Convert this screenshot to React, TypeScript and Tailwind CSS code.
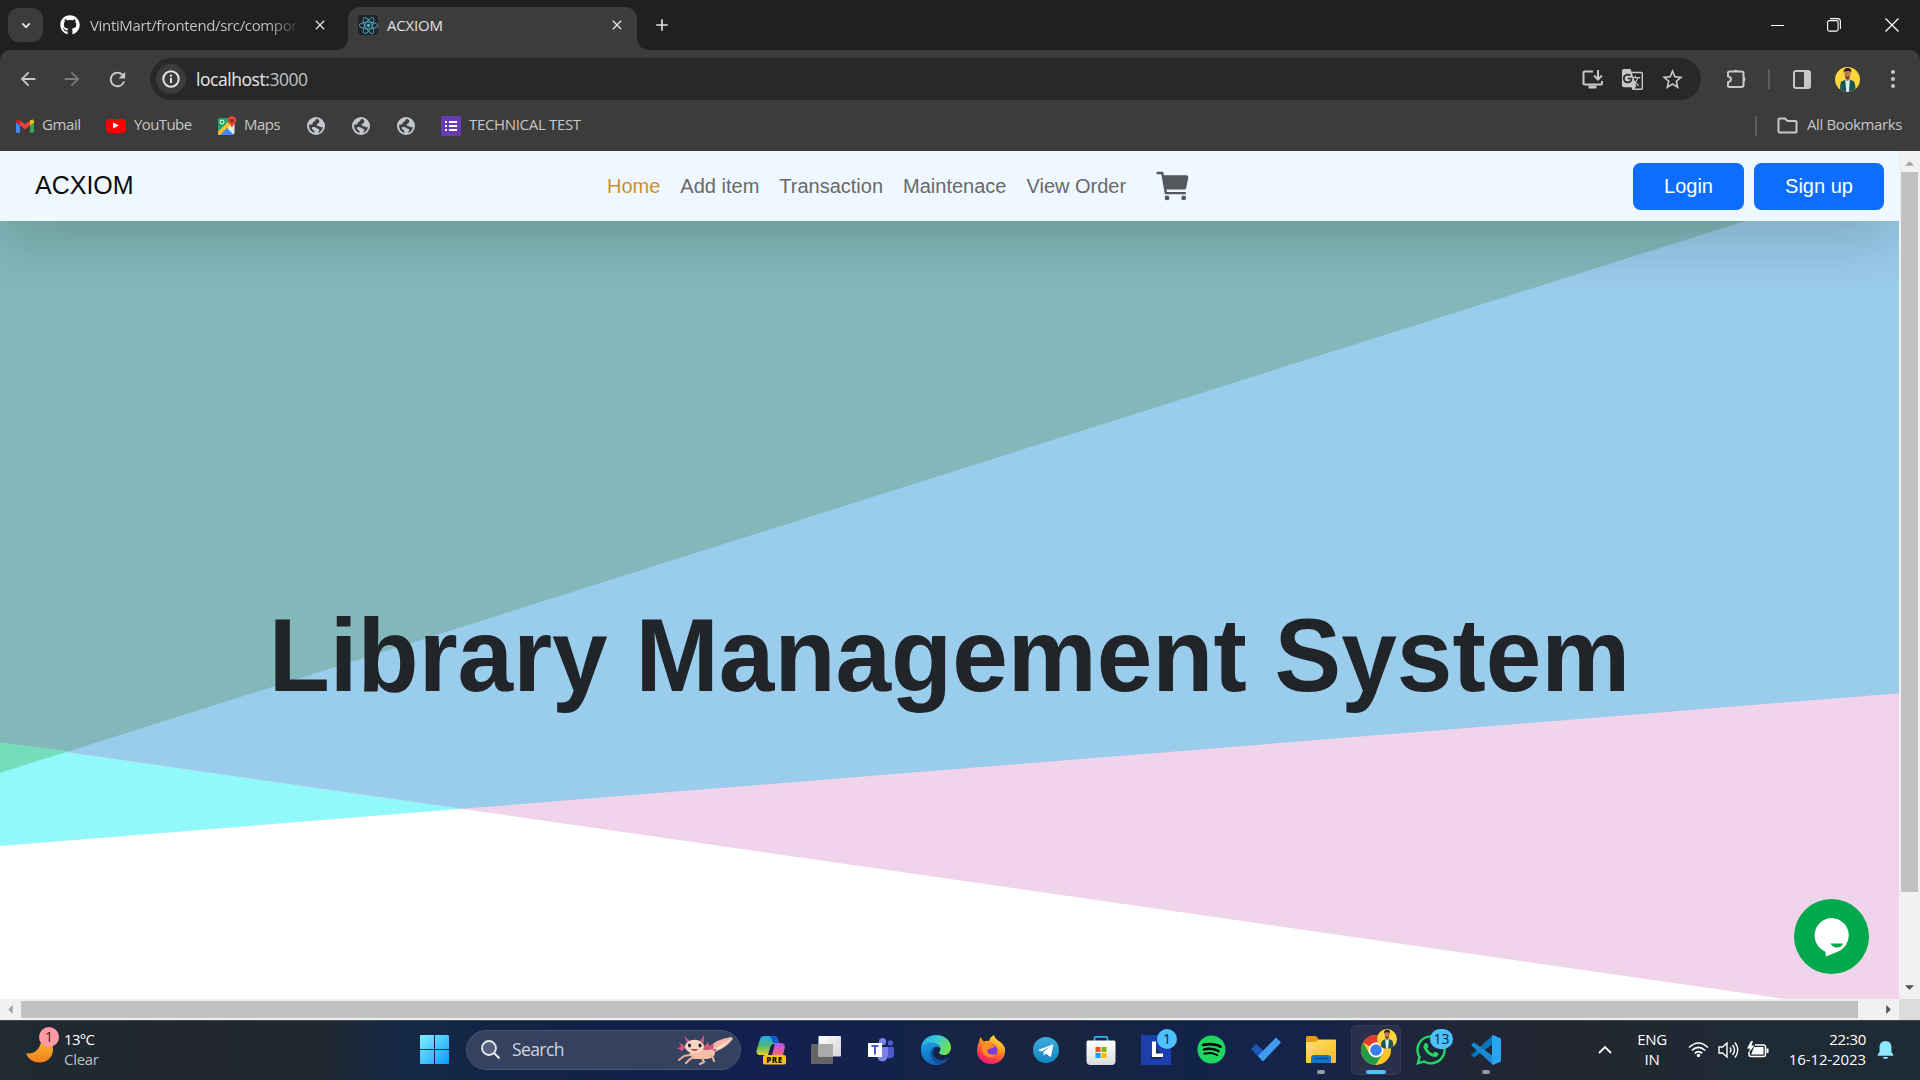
import React from "react";
import { FaGithub, FaReact, FaSpotify, FaWhatsapp } from "react-icons/fa";
import { IoCart } from "react-icons/io5";
import { MdArrowBack, MdArrowForward, MdRefresh, MdStarBorder, MdClose, MdAdd, MdGTranslate } from "react-icons/md";

function Avatar({ className }: { className: string }) {
  return (
    <svg viewBox="0 0 25 25" className={className}>
      <defs>
        <clipPath id="avatarClip"><circle cx="12.5" cy="12.5" r="12.5" /></clipPath>
      </defs>
      <g clipPath="url(#avatarClip)">
        <rect width="25" height="25" fill="#fdd63b" />
        <path d="M5 25c0-6 .4-9 1.300-10.400L11 12.500h4l4 2c1.200 2 1.500 6 1.500 10.500z" fill="#1c5653" />
        <path d="M10.300 12.500h4.600l-1 12.500h-2.600z" fill="#d8eef2" />
        <path d="M10.600 9h3.800v3.500l-1.900 1.700-1.900-1.700z" fill="#a96a45" />
        <ellipse cx="12.500" cy="6.800" rx="3" ry="4" fill="#b87a52" />
        <path d="M8.800 6C8.200 2.500 10.300 1 12.600 1s4.300 1.300 3.600 5c-.6-1.600-1-2-3.400-2S9.300 4.300 8.800 6z" fill="#2b1d1a" />
        <path d="M10 8.300c.4 2.600 4.600 2.600 5 0 0 4.400-5 4.400-5 0z" fill="#3a241c" />
      </g>
    </svg>
  );
}

function GlobeIcon() {
  return (
    <span className="flex h-[18px] w-[18px] items-center justify-center">
      <svg viewBox="0 0 18 18" className="h-[18px] w-[18px]">
        <circle cx="9" cy="9" r="9" fill="#c4c7cc" />
        <path d="M10.500 1.900c-2.500 0-1.800 2-3.200 2.600-.8.400-1.600.3-1.500 1.500 0 1.200-1.300 1.500-2.500 1.600H2.200c-.6 3.800 1.300 7.100 5.300 8.400v-1.700c0-1-1.200-1.300-2-1.900-.8-.7-1-1.900-.1-2.100 1.800-.4 3.300-.2 4 .8.700 1 2.900.5 2.900 2.100 0 1.200-1.300 1.500-1.200 2.900 2.800-.8 4.700-3.600 4.900-6.300-1 .7-2.600.8-3.300-.2-.6-.9-2.700-.3-3-1.700-.2-1.200 1.300-1.300 1.900-2 .7-.8 1.700-2.500-1.100-4z" fill="#3f4043" />
      </svg>
    </span>
  );
}

function TabStrip() {
  return (
    <div className="flex h-[50px] bg-[#1f2121]">
      <div className="ml-2 mt-2 flex h-[34px] w-[35px] items-center justify-center rounded-[11px] bg-[#3c3c3c]">
        <svg viewBox="0 0 12 8" className="h-[7px] w-[10px]"><path d="M1.500 1.500L6 6l4.500-4.500" fill="none" stroke="#e3e3e3" strokeWidth="2.200" /></svg>
      </div>
      <div className="flex w-[305px] items-center pl-[17px]">
        <FaGithub className="h-[20px] w-[20px] text-white" />
        <span className="ml-[10px] w-[210px] whitespace-nowrap bg-gradient-to-r from-[#c7c7c7] from-85% to-transparent bg-clip-text text-[15px] tracking-[-0.35px] text-transparent">VintiMart/frontend/src/compon</span>
        <MdClose className="ml-[12px] h-[16px] w-[16px] text-[#dedede]" />
      </div>
      <div className="relative mt-[7px] flex h-[43px] w-[289px] items-center rounded-t-[12px] bg-[#3c3c3c] pb-[7px] pl-[10px]">
        <svg viewBox="0 0 12 12" className="absolute bottom-0 left-[-12px] h-3 w-3"><path d="M12 0v12H0C7 12 12 7 12 0z" fill="#3c3c3c" /></svg>
        <svg viewBox="0 0 12 12" className="absolute bottom-0 right-[-12px] h-3 w-3"><path d="M0 0v12h12C5 12 0 7 0 0z" fill="#3c3c3c" /></svg>
        <span className="flex h-5 w-5 items-center justify-center rounded-[3px] bg-[#20232a]"><FaReact className="h-[19px] w-[19px] text-[#4fb4cc]" /></span>
        <span className="ml-[9px] w-[220px] text-[15px] tracking-[-0.2px] text-[#e3e3e3]">ACXIOM</span>
        <MdClose className="ml-[2px] h-[16px] w-[16px] text-[#e3e3e3]" />
      </div>
      <MdAdd className="ml-[15px] mt-[15px] h-[20px] w-[20px] text-[#dedede]" />
      <div className="ml-auto flex items-center pr-[21px]">
        <span className="h-px w-[13px] bg-white" />
        <svg viewBox="0 0 14 14" className="ml-[43px] h-[14px] w-[14px]" fill="none" stroke="#fff" strokeWidth="1.100">
          <rect x=".6" y="2.600" width="10.500" height="10.500" rx="1.800" /><path d="M3 .6h7.500c1.700 0 2.900 1.200 2.900 2.900v7.500" />
        </svg>
        <svg viewBox="0 0 14 14" className="ml-[44px] h-[14px] w-[14px]" stroke="#fff" strokeWidth="1.200"><path d="M.5 .5l13 13M13.500 .5l-13 13" /></svg>
      </div>
    </div>
  );
}

function Toolbar() {
  return (
    <div className="bg-[#1f2121]">
      <div className="flex h-[58px] items-center rounded-t-[10px] bg-[#3c3c3c] text-[#c7c7c7]">
        <MdArrowBack className="ml-[17px] h-[22px] w-[22px]" />
        <MdArrowForward className="ml-[22px] h-[22px] w-[22px] text-[#7b7b7b]" />
        <MdRefresh className="ml-[23px] h-[23px] w-[23px]" />
        <div className="ml-[21px] flex h-[42px] w-[1551px] items-center rounded-full bg-[#282828] pl-[6px]">
          <span className="flex h-[30px] w-[30px] items-center justify-center rounded-full bg-[#3c3c3c]">
            <svg viewBox="0 0 18 18" className="h-[18px] w-[18px]" fill="none" stroke="#e3e3e3" strokeWidth="2"><circle cx="9" cy="9" r="7.700" /><path d="M9 8v5M9 4.800v2" /></svg>
          </span>
          <span className="ml-[10px] text-[17.500px] tracking-[-0.45px] text-[#e8e8e8]">localhost:<span className="text-[#bfc2c6]">3000</span></span>
          <svg viewBox="0 0 21 19" className="ml-auto h-[19px] w-[21px]" fill="none" stroke="#c7c7c7" strokeWidth="2"><path d="M11 1.500H2.500q-1 0-1 1v11q0 1 1 1H19q1 0 1-1V11M16 0v9M12 5.500l4 4 4-4" /><path d="M6.500 17h8" strokeWidth="3" /></svg>
          <MdGTranslate className="ml-[18px] h-[23px] w-[23px]" />
          <MdStarBorder className="ml-[16px] mr-[16px] h-[25px] w-[25px]" />
        </div>
        <svg viewBox="0 0 22 22" className="ml-[25px] h-[22px] w-[22px]" fill="none" stroke="#c7c7c7" strokeWidth="2"><path d="M3 3.500h12.500q2 0 2 2v11.500q0 2-2 2H3.500q-1.500 0-1.500-1.500v-3.200c2-.6 3-1.700 3-3s-1-2.400-3-3V5q0-1.500 1.500-1.500z" /><path d="M7 3.500a3 3 0 0 1 5.500 0zM17.500 8.500v5.500a2.900 2.900 0 0 0 0-5.500z" fill="#c7c7c7" stroke="none" /></svg>
        <span className="ml-[20px] h-[20px] w-[2px] bg-[#5d5d5d]" />
        <svg viewBox="0 0 18 19" className="ml-[23px] h-[19px] w-[18px]"><rect x="1" y="1" width="16" height="17" rx="2" fill="none" stroke="#c7c7c7" strokeWidth="2" /><path d="M11 1h6v17h-6z" fill="#c7c7c7" /></svg>
        <Avatar className="ml-[24px] h-[25px] w-[25px]" />
        <div className="ml-[31px] flex flex-col gap-[3px]">
          <i className="h-1 w-1 rounded-full bg-[#c7c7c7]" /><i className="h-1 w-1 rounded-full bg-[#c7c7c7]" /><i className="h-1 w-1 rounded-full bg-[#c7c7c7]" />
        </div>
      </div>
    </div>
  );
}

function Bookmarks() {
  return (
    <div className="flex h-[43px] items-center bg-[#3c3c3c] pb-[8px] text-[15px] text-[#c7c7c7]">
      <div className="flex w-[90px] items-center pl-4">
        <svg viewBox="0 0 20 15" className="h-[14px] w-[18px]">
          <path d="M0 2v12q0 1 1 1h3.500V6z" fill="#4285f4" /><path d="M20 2v12q0 1-1 1h-3.500V6z" fill="#34a853" />
          <path d="M15.500 1.500L18 .3q2 .2 2 2.200v1.200L15.500 7z" fill="#fbbc04" /><path d="M4.500 1.500L10 5.600l5.500-4.100V7L10 11 4.500 7z" fill="#ea4335" /><path d="M4.500 1.500L2 .3Q0 .5 0 2.500v1.200L4.500 7z" fill="#c5221f" />
        </svg>
        <span className="relative -top-px ml-2 tracking-[-0.4px]">Gmail</span>
      </div>
      <div className="flex w-[111px] items-center pl-4">
        <span className="flex h-[14px] w-5 items-center justify-center rounded-[4px] bg-[#f00]"><svg viewBox="0 0 6 6" className="h-[7px] w-[6px]"><path d="M0 0l6 3-6 3z" fill="#fff" /></svg></span>
        <span className="relative -top-px ml-2 tracking-[-0.6px]">YouTube</span>
      </div>
      <div className="flex w-[106px] items-center pl-4">
        <svg viewBox="0 0 20 20" className="h-[20px] w-[20px]">
          <path d="M2 2h11v17H2q-1 0-1-1V3q0-1 1-1z" fill="#1fa463" /><path d="M2 19L15 5l2 2v11z" fill="#e8eaed" /><path d="M1 15.500L14 3l3.500 4L5 19H2q-1 0-1-1z" fill="#fbc02d" /><path d="M3 19l7-7 7 7z" fill="#4285f4" /><path d="M11 11l6.500-5v12z" fill="#e8eaed" />
          <circle cx="5" cy="6" r="2" fill="none" stroke="#fff" /><path d="M15 0a4.300 4.300 0 0 0-4.200 4.500C11 7.500 14 8 15 12c1-4 4-4.500 4.200-7.500A4.300 4.300 0 0 0 15 0z" fill="#db4437" /><circle cx="15" cy="4.500" r="1.500" fill="#7b231c" />
        </svg>
        <span className="relative -top-px ml-[7px] tracking-[-0.5px]">Maps</span>
      </div>
      <div className="flex w-[134px] gap-[27px]"><GlobeIcon /><GlobeIcon /><GlobeIcon /></div>
      <div className="flex items-center">
        <svg viewBox="0 0 20 20" className="h-5 w-5"><rect width="20" height="20" rx="1.500" fill="#673ab7" /><path d="M4 6h2M8 6h8M4 10h2M8 10h8M4 14h2M8 14h8" stroke="#fff" strokeWidth="2" /></svg>
        <span className="relative -top-px ml-2 tracking-[-0.33px]">TECHNICAL TEST</span>
      </div>
      <span className="ml-auto h-5 w-[2px] bg-[#5d5d5d]" />
      <svg viewBox="0 0 21 17" className="ml-[20px] h-[17px] w-[21px]"><path d="M2.500 1.500h5.500l2.500 2.500h8q1 0 1 1v9.500q0 1-1 1h-16q-1 0-1-1v-12q0-1 1-1z" fill="none" stroke="#c7c7c7" strokeWidth="2" /></svg>
      <span className="relative -top-px ml-[9px] w-[113px] whitespace-nowrap tracking-[-0.38px]">All Bookmarks</span>
    </div>
  );
}

const links = ["Add item", "Transaction", "Maintenace", "View Order"];

function Page() {
  return (
    <main className="relative flex h-[848px] w-[1899px] flex-col overflow-hidden bg-white font-['Liberation_Sans',Arial,sans-serif]">
      <nav className="relative z-10 flex h-[70px] shrink-0 items-center bg-[#f0f8ff] text-[20px] shadow-[0_20px_60px_rgba(0,0,0,0.175)]">
        <span className="w-[607px] pl-[35px] text-[25px] text-[#0b0d0f]">ACXIOM</span>
        <div className="flex items-center gap-5 text-[#66696d]">
          <span className="text-[#cd8f30]">Home</span>
          {links.map((l) => <span key={l} className="whitespace-nowrap">{l}</span>)}
          <IoCart className="ml-[8px] h-[38px] w-[38px] text-[#54575b]" />
        </div>
        <div className="ml-auto mr-[15px] flex gap-[10px] text-white">
          <button className="h-[47px] w-[111px] rounded-[7.500px] bg-[#0d6efd]">Login</button>
          <button className="h-[47px] w-[130px] rounded-[7.500px] bg-[#0d6efd]">Sign up</button>
        </div>
      </nav>
      <section className="relative flex flex-1 items-center justify-center">
        <svg viewBox="0 221 1899 778" className="absolute inset-0 h-full w-full">
          <path d="M0 221H1899V693.300L0 846z" fill="#92f9fb" />
          <path d="M0 221H1899V999H1785L0 742.500z" fill="#f0d4ec" />
          <path d="M0 221H1899V693.300L462 808.800L0 742.500z" fill="#9acceb" />
          <path d="M0 221H1745L68 751.500L0 742.500z" fill="#82b8ba" />
          <path d="M0 742.500L68 751.500L0 772.700z" fill="#74debc" />
        </svg>
        <h1 className="relative mt-[92px] origin-[50%_80%] scale-y-[1.035] whitespace-nowrap text-[100px] font-bold leading-[120px] text-[#212529]">Library Management System</h1>
      </section>
      <div className="absolute bottom-[25px] right-[30px] flex h-[75px] w-[75px] items-center justify-center rounded-full bg-[#04a94d]">
        <svg viewBox="0 0 36 40" className="h-[40px] w-[36px]"><path d="M18 1a17.500 17.500 0 0 0-6.500 33.700l.3 4.700L23 35A17.500 17.500 0 0 0 18 1z" fill="#fff" /><path d="M16.500 26.500h12.500q-1.500 4-6 4t-6.500-4z" fill="#04a94d" /></svg>
      </div>
    </main>
  );
}

function VerticalScroll() {
  return (
    <div className="flex w-[21px] flex-col items-center bg-[#f1f1f1]">
      <span className="flex h-[21px] items-center pt-[3px]"><svg viewBox="0 0 10 5" className="h-[5px] w-[9px]"><path d="M0 5l5-5 5 5z" fill="#a3a3a3" /></svg></span>
      <span className="h-[720px] w-[17px] bg-[#c1c1c1]" />
      <svg viewBox="0 0 10 5" className="mb-[9px] mt-auto h-[5px] w-[9px]"><path d="M0 0l5 5 5-5z" fill="#505050" /></svg>
    </div>
  );
}

function HorizontalScroll() {
  return (
    <div className="flex h-[21px]">
      <div className="flex w-[1899px] items-center bg-[#f1f1f1]">
        <span className="flex w-[21px] justify-center"><svg viewBox="0 0 5 10" className="h-[9px] w-[5px]"><path d="M5 0L0 5l5 5z" fill="#a3a3a3" /></svg></span>
        <span className="h-[17px] w-[1837px] bg-[#c1c1c1]" />
        <svg viewBox="0 0 5 10" className="ml-auto mr-[8px] h-[9px] w-[5px]"><path d="M0 0l5 5-5 5z" fill="#505050" /></svg>
      </div>
      <span className="w-[21px] bg-[#dcdcdc]" />
    </div>
  );
}

function Axolotl() {
  return (
    <svg viewBox="0 0 56 30" className="h-[30px] w-[56px]">
      <path d="M32 12Q40 4 54 2q3 1 1 3-5 7-17 12z" fill="#f4b7a8" /><path d="M35 15Q44 11 55 3q-7 9-19 14z" fill="#fbe1d2" />
      <path d="M29 13l1-6 3 4 4-3-1 6 4 0-4 5z" fill="#c95a7b" />
      <path d="M12 18q10-4 19-4 7 0 7 4 0 5-8 6H16z" fill="#f3bfa8" />
      <path d="M13 20l-6 1-5 4M17 22l-4 2-4 4M25 23l2 4-4 2M34 21l2 2 1 3" fill="none" stroke="#e9af98" strokeWidth="2.200" strokeLinecap="round" strokeLinejoin="round" />
      <path d="M10 8L7 1l6 5zM23 6l4-6 0 8zM9 12L2 7l2 5-4 1 5 3zM26 12l6-5-2 6 4 2-7 0z" fill="#d0557c" />
      <ellipse cx="17.500" cy="11.500" rx="9.500" ry="6.800" fill="#fbd5c2" />
      <ellipse cx="12.500" cy="10.500" rx="1.500" ry="1.900" fill="#1d2430" /><ellipse cx="23" cy="10.500" rx="1.500" ry="1.900" fill="#1d2430" />
      <path d="M13.500 14q4 4 8 0z" fill="#ad3f4d" />
    </svg>
  );
}

function Cell({ children, mark }: { children: React.ReactNode; mark?: boolean }) {
  return (
    <div className="relative flex h-[60px] w-[55px] items-center justify-center">
      {children}
      {mark && <i className="absolute bottom-[6px] h-1 w-2 rounded-full bg-[#989ba6]" />}
    </div>
  );
}

function Apps() {
  return (
    <div className="ml-[2px] flex">
      <Cell>
        <svg viewBox="0 0 30 30" className="h-[30px] w-[30px]">
          <defs>
            <linearGradient id="cpA" x1="0" y1="0" x2="0" y2="1"><stop stopColor="#22a7e8" /><stop offset=".5" stopColor="#4bb87a" /><stop offset="1" stopColor="#e6cf20" /></linearGradient>
            <linearGradient id="cpB" x1="0" y1="0" x2="0" y2="1"><stop stopColor="#a558f0" /><stop offset=".6" stopColor="#ef5a90" /><stop offset="1" stopColor="#f98b4c" /></linearGradient>
          </defs>
          <path d="M8 1h10q3 0 4 4l1 4h-5q-3 0-4 4l-2 7H5q-6 0-4-6L4 4q1-3 4-3z" fill="url(#cpA)" />
          <path d="M14 1h4q3 0 4 4l1 3h-5q-2 0-2-3z" fill="#1559d6" />
          <path d="M19 8h6q5 0 3.500 6L27 20q-1 3-4 3H12q4-1 4.500-5L18 12z" fill="url(#cpB)" />
          <rect x="7" y="20" width="23" height="9.500" rx="2" fill="#fcc40a" />
          <text x="18.500" y="27.800" textAnchor="middle" fontSize="8" fontWeight="800" letterSpacing=".5" fontFamily="Open Sans" fill="#17130a">PRE</text>
        </svg>
      </Cell>
      <Cell>
        <svg viewBox="0 0 30 28" className="h-[28px] w-[30px]">
          <defs><linearGradient id="tv" x1="0" y1="0" x2="1" y2="1"><stop stopColor="#fff" /><stop offset="1" stopColor="#d4d4d4" /></linearGradient></defs>
          <rect x="0" y="8" width="22" height="20" rx="1" fill="#656565" /><rect x="7.500" y="0" width="22.500" height="20.500" rx="1" fill="url(#tv)" /><path d="M7.500 8H22v12.500H7.500z" fill="#aaa" />
        </svg>
      </Cell>
      <Cell>
        <svg viewBox="0 0 26 24" className="h-[24px] w-[26px]">
          <circle cx="22.500" cy="5" r="2.700" fill="#5059c9" /><path d="M17 9h9v8q-1 4-6 3z" fill="#5059c9" />
          <circle cx="14.500" cy="3.700" r="3.600" fill="#7b83eb" /><path d="M9 9h11v8q-.5 6-5.500 6.500Q9.500 23 9 17z" fill="#7b83eb" />
          <rect y="5" width="14" height="14" fill="#fff" /><path d="M3.500 8h7M7 8v8.500" stroke="#5059c9" strokeWidth="2" />
        </svg>
      </Cell>
      <Cell>
        <svg viewBox="0 0 30 30" className="h-[30px] w-[30px]">
          <defs>
            <linearGradient id="edA" x1="0" y1="0" x2="1" y2=".4"><stop stopColor="#2aa3e0" /><stop offset=".5" stopColor="#35c8dc" /><stop offset="1" stopColor="#6ee35a" /></linearGradient>
            <linearGradient id="edB" x1="0" y1="0" x2=".4" y2="1"><stop stopColor="#1fa0e8" /><stop offset="1" stopColor="#0b62b8" /></linearGradient>
          </defs>
          <path d="M0 13C1 5 7 0 15 0c9 0 15 6 15 12.500 0 5-3.500 7.500-7 7.500-3 0-5-1-5-2.500 0-.8 1.500-1.300 1.500-3.500 0-3-3-5.500-7-5.500C6 8.500 1 12 0 13z" fill="url(#edA)" />
          <path d="M0 13c1-3 5-5.500 10-5.500 6 0 9.500 3.500 9.500 6.500-1-2-4-3-6.500-1.500-3 2-3.500 7 0 10.500 3 3 8 4 14 .5C24 28 20 30 15 30 6 30 0 23 0 15z" fill="url(#edB)" />
          <path d="M10 16c-2 7 4 13.500 10 13 4-1 7-4 8-6-8 4-14 1-15.500-3-.8-2 0-5 1-7-1.500 0-3 1-3.500 3z" fill="#124f94" />
        </svg>
      </Cell>
      <Cell>
        <svg viewBox="0 0 30 30" className="h-[30px] w-[30px]">
          <defs><linearGradient id="ff" x1=".8" y1="0" x2=".3" y2="1"><stop stopColor="#fff04a" /><stop offset=".4" stopColor="#ff9a22" /><stop offset=".75" stopColor="#ff3a48" /><stop offset="1" stopColor="#e5177a" /></linearGradient></defs>
          <path d="M3 7q0-3 2-5 .5 3 3 4.500 2-1 5-.5 1-4 5-6 .5 3 4 5.500Q28 9 29 14c1 9-6 15-14 15S.5 23 1 15q0-4 2-8z" fill="url(#ff)" />
          <circle cx="15" cy="15.500" r="6.500" fill="#7a3fd0" /><path d="M7 9q4-3 8-1l4 4-6 2q-3 1-1 4 3 3 8 1-3 5-8 3-6-2-6-8 0-3 1-5z" fill="#ff8a22" />
        </svg>
      </Cell>
      <Cell>
        <svg viewBox="0 0 26 26" className="h-[26px] w-[26px]"><defs><linearGradient id="tg" x1="0" y1="0" x2="0" y2="1"><stop stopColor="#37aee2" /><stop offset="1" stopColor="#1683bd" /></linearGradient></defs><circle cx="13" cy="13" r="13" fill="url(#tg)" /><path d="M5 13l14.500-5.500q1-.3.800.8L18 19q-.3 1-1.300.4L13 16.600l-2 2-.7-3.600L17 9.600l-8.500 5z" fill="#fff" /></svg>
      </Cell>
      <Cell>
        <svg viewBox="0 0 30 30" className="h-[30px] w-[30px]">
          <defs><linearGradient id="st" x1="0" y1="0" x2="0" y2="1"><stop stopColor="#fff" /><stop offset="1" stopColor="#dcdcdc" /></linearGradient></defs>
          <path d="M8.500 6V3q0-1.200 1.200-1.200h10.600q1.200 0 1.200 1.200v3" fill="none" stroke="#2fb4ec" strokeWidth="1.700" />
          <path d="M2 5.500h26q1.500 0 1.500 1.500v19q0 4-4 4h-21q-4 0-4-4V7q0-1.500 1.500-1.500z" fill="url(#st)" />
          <path d="M9.500 12h5v5h-5z" fill="#f25022" /><path d="M15.500 12h5v5h-5z" fill="#7fba00" /><path d="M9.500 18h5v5h-5z" fill="#00a4ef" /><path d="M15.500 18h5v5h-5z" fill="#ffb900" />
        </svg>
      </Cell>
      <Cell>
        <svg viewBox="0 0 30 30" className="h-[30px] w-[30px]"><rect width="30" height="30" fill="#1d3fae" /><path d="M11 8v12l-2 4h12l1-3z" fill="#142a55" /><path d="M11 6.500h4v12h7V22H11z" fill="#fff" /></svg>
        <span className="absolute left-[29px] top-[9px] flex h-5 w-5 items-center justify-center rounded-full bg-[#4cc2ff] text-[14px] leading-none text-[#0e2738]">1</span>
      </Cell>
      <Cell><span className="ml-px flex h-[26px] w-[26px] items-center justify-center rounded-full bg-black"><FaSpotify className="h-[29px] w-[29px] shrink-0 text-[#1ed760]" /></span></Cell>
      <Cell>
        <svg viewBox="0 0 30 25" className="h-[25px] w-[30px]"><path d="M0 12l5-5 10 9-3.500 8.500z" fill="#1c57b8" /><path d="M7 19L25 .5 30 5.500 12 24.500z" fill="#3f9bed" /></svg>
      </Cell>
      <Cell mark>
        <svg viewBox="0 0 30 27" className="h-[27px] w-[30px]"><defs><linearGradient id="fo" x1="0" y1="0" x2="1" y2="1"><stop stopColor="#ffdf70" /><stop offset="1" stopColor="#f9bb17" /></linearGradient></defs><path d="M1 0h9l3 3.500V8H0V1z" fill="#dfa006" /><path d="M0 6h9l4-2.500h16q1 0 1 1V26q0 1-1 1H1q-1 0-1-1z" fill="url(#fo)" /><path d="M5 27v-5q0-3 3-3h14q3 0 3 3v5z" fill="#1277c9" /><path d="M9 22.500h13" stroke="#0b4a86" strokeWidth="1.300" /></svg>
      </Cell>
      <div className="relative flex h-[60px] w-[55px] items-center justify-center">
        <div className="relative flex h-[50px] w-[50px] items-center justify-center rounded-[6px] border border-[#343c58] bg-[#2a304b]">
          <svg viewBox="0 0 30 30" className="h-[30px] w-[30px]">
            <circle cx="15" cy="15" r="15" fill="#fcc624" />
            <path d="M15 15L2 7.500A15 15 0 0 1 28 7.500H15z" fill="#e33b2e" />
            <path d="M2 7.500A15 15 0 0 0 14.500 30L21.500 18.750 8.500 18.750z" fill="#229a48" />
            <circle cx="15" cy="15" r="7.500" fill="#fff" /><circle cx="15" cy="15" r="5.800" fill="#3b7de9" />
          </svg>
          <Avatar className="absolute left-[25px] top-[3px] h-5 w-5" />
          <i className="absolute bottom-0 h-1 w-5 rounded-full bg-[#4cc2ff]" />
        </div>
      </div>
      <Cell>
        <FaWhatsapp className="h-[34px] w-[34px] text-[#25d366]" />
        <span className="absolute left-[27px] top-[9px] flex h-5 w-[23px] items-center justify-center rounded-full bg-[#4cc2ff] text-[14px] leading-none text-[#0e2738]">13</span>
      </Cell>
      <Cell mark>
        <svg viewBox="0 0 30 30" className="h-[30px] w-[30px]"><path d="M0 20l22-20v9L3 22.500z" fill="#0a74ba" /><path d="M0 10l3-2.500L22 21v9z" fill="#1b8ad3" /><path d="M22 0l7 3q1 .5 1 1.500v21q0 1-1 1.500l-7 3-1-1V1z" fill="#2aa6f0" /></svg>
      </Cell>
    </div>
  );
}

function Taskbar() {
  return (
    <footer className="flex h-[60px] shrink-0 items-center border-t border-[#3d4a55] bg-[linear-gradient(90deg,#1f2a33_0%,#22262f_10%,#1f2932_17%,#152846_21%,#122348_30%,#141f4e_40%,#12234a_47%,#1a243e_54%,#12234a_62%,#14234a_68%,#20263a_74%,#22262f_82%,#1e2a34_90%,#1e2a34_100%)] pb-[2px] text-white">
      <div className="relative ml-[26px] h-[30px] w-[30px]">
        <svg viewBox="0 0 28 28" className="h-[28px] w-[28px]"><defs><linearGradient id="mo" x1="0" y1="0" x2="0" y2="1"><stop stopColor="#fbc02d" /><stop offset="1" stopColor="#f07f1d" /></linearGradient></defs><path d="M0 18.500Q14 20 16 2q11 4 11 12.500C27 30 5 32 0 18.500z" fill="url(#mo)" /></svg>
        <span className="absolute left-[13px] top-[-8px] flex h-5 w-5 items-center justify-center rounded-full bg-[#ff99a4] text-[14px] leading-none text-[#3a1b20]">1</span>
      </div>
      <div className="relative -top-px ml-2 w-[356px] text-[15px] leading-[20px]">
        <p className="tracking-[-0.7px]">13°C</p>
        <p className="tracking-[-0.3px] text-[#bcc0c3]">Clear</p>
      </div>
      <svg viewBox="0 0 29 29" className="h-[29px] w-[29px]"><defs><linearGradient id="wn" x1="0" y1="0" x2="1" y2="1"><stop stopColor="#7ff0ff" /><stop offset="1" stopColor="#0d99fb" /></linearGradient></defs><path d="M1 0h13v14H0V1q0-1 1-1zM15 0h13q1 0 1 1v13H15zM0 15h14v14H1q-1 0-1-1zM15 15h14v13q0 1-1 1H15z" fill="url(#wn)" /></svg>
      <div className="ml-[17px] flex h-[40px] w-[275px] items-center rounded-full border border-[#46536f] bg-[#34425f] pl-[14px]">
        <svg viewBox="0 0 19 19" className="h-[19px] w-[19px]" fill="none" stroke="#e7eaf0" strokeWidth="1.800"><circle cx="8" cy="8" r="7" fill="#55627d" /><path d="M13 13l5.500 5.500" strokeWidth="2.200" /></svg>
        <span className="ml-[12px] text-[17.500px] tracking-[-0.6px] text-[#d0d5de]">Search</span>
        <span className="ml-auto mr-[7px]"><Axolotl /></span>
      </div>
      <Apps />
      <div className="ml-auto flex items-center pr-[26px] text-[15px] leading-[20px]">
        <svg viewBox="0 0 14 9" className="h-[9px] w-[14px]"><path d="M1 8l6-6 6 6" fill="none" stroke="#fff" strokeWidth="1.800" /></svg>
        <div className="relative -top-px ml-[25px] w-[30px] text-center tracking-[-0.3px]"><p>ENG</p><p>IN</p></div>
        <svg viewBox="0 0 21 16" className="ml-[21px] h-[16px] w-[21px]" fill="none" stroke="#fff" strokeWidth="1.500"><path d="M1 5.500q9.500-9 19 0" /><path d="M3.800 8.500q6.700-6.300 13.400 0" /><path d="M6.700 11.400q3.800-3.600 7.600 0" /><circle cx="10.500" cy="13.500" r="1.700" fill="#fff" stroke="none" /></svg>
        <svg viewBox="0 0 21 18" className="ml-[9px] h-[18px] w-[21px]" fill="none" stroke="#fff" strokeWidth="1.400"><path d="M1 6h3.500L9 2v14L4.500 12H1zM12 6.500q2 2.500 0 5M14.500 4q4 5 0 10M17 1.500q5.500 7.500 0 15" /></svg>
        <svg viewBox="0 0 22 17" className="ml-[8px] h-[17px] w-[22px]"><path d="M8 4h8.500q2 0 2 2v7.500q0 2-2 2H4q-2 0-2-2V11" fill="none" stroke="#fff" strokeWidth="1.500" /><path d="M7 6h9.500v7.500H4.200zM19.500 7.500h2v4.500h-2zM4 0L0 7.500h3L1.500 12 7.500 4.500h-3L6 0z" fill="#fff" /></svg>
        <div className="relative -top-px ml-[10px] w-[87px] text-right"><p className="tracking-[-0.3px]">22:30</p><p className="whitespace-nowrap tracking-[-0.1px]">16-12-2023</p></div>
        <svg viewBox="0 0 18 20" className="ml-[11px] h-[20px] w-[17px]"><path d="M9 .5c-4 0-6.300 3-6.300 6.500v5L.7 15v1h16.600v-1l-2-3V7C15.300 3.500 13 .5 9 .5zM6 17.500h6q-1 2-3 2t-3-2z" fill="#8ee8ff" /></svg>
      </div>
    </footer>
  );
}

export default function App() {
  return (
    <div className="flex h-[1080px] w-[1920px] flex-col overflow-hidden font-['Open_Sans','Noto_Sans',sans-serif]">
      <TabStrip />
      <Toolbar />
      <Bookmarks />
      <div className="flex h-[848px] shrink-0">
        <Page />
        <VerticalScroll />
      </div>
      <HorizontalScroll />
      <Taskbar />
    </div>
  );
}
